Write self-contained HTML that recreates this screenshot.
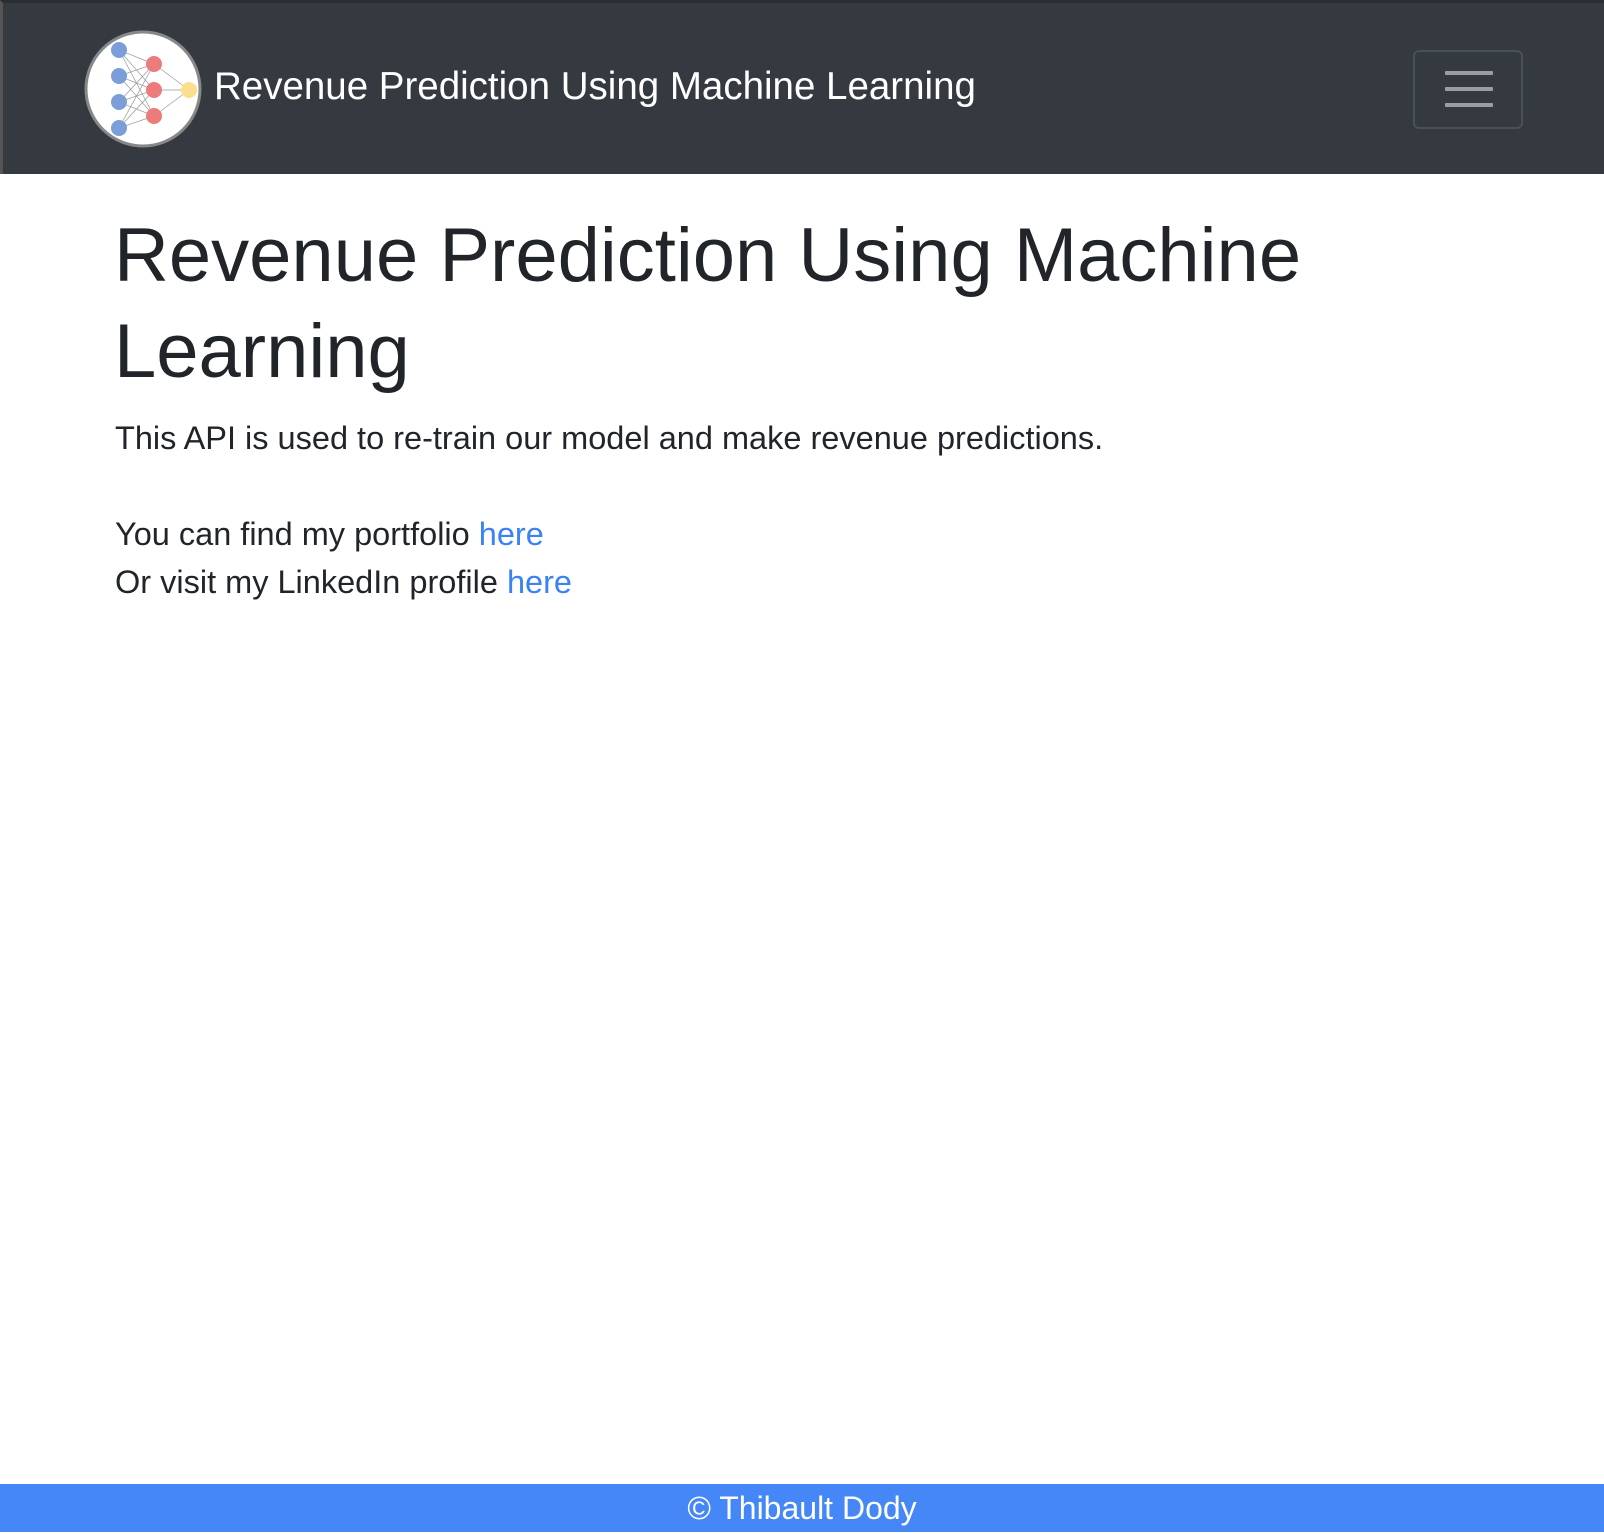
<!DOCTYPE html>
<html><head><style>
body{margin:0;width:1604px;height:1534px;position:relative;background:#fff;font-family:"Liberation Sans",sans-serif;color:#212529;overflow:hidden}
.nav{position:absolute;left:0;top:0;width:1604px;height:174px;background:#343a40;border-top:3px solid #2a2d31;border-left:3px solid #555;box-sizing:border-box}
.logo{position:absolute;left:81px;top:27px;width:118px;height:118px}
.brand{position:absolute;left:211px;top:62px;font-size:38.5px;color:#fff;white-space:nowrap}
.tog{position:absolute;left:1410px;top:47px;width:110px;height:79px;border:2px solid #4a5057;border-radius:6px;box-sizing:border-box}
.tog i{position:absolute;left:30px;width:48px;height:4px;background:#9a9da1;border-radius:1px}
h1{position:absolute;left:114px;top:208px;margin:0;font-weight:normal;font-size:76px;line-height:96px;width:1250px}
.p{position:absolute;left:115px;font-size:32.5px;white-space:nowrap}
a{color:#3b82f6;text-decoration:none}
.foot{position:absolute;left:0;top:1484px;width:1604px;height:48px;background:#4587f6;color:#fff;font-size:32px;text-align:center;line-height:48px}
</style></head><body>
<div class="nav">
<svg class="logo" viewBox="0 0 118 118">
<circle cx="59" cy="59" r="57" fill="#fff" stroke="#888" stroke-width="3"/>
<g stroke="#999" stroke-width="0.7">
<line x1="35" y1="20" x2="70" y2="34"/><line x1="35" y1="20" x2="70" y2="60"/><line x1="35" y1="20" x2="70" y2="86"/>
<line x1="35" y1="46" x2="70" y2="34"/><line x1="35" y1="46" x2="70" y2="60"/><line x1="35" y1="46" x2="70" y2="86"/>
<line x1="35" y1="72" x2="70" y2="34"/><line x1="35" y1="72" x2="70" y2="60"/><line x1="35" y1="72" x2="70" y2="86"/>
<line x1="35" y1="98" x2="70" y2="34"/><line x1="35" y1="98" x2="70" y2="60"/><line x1="35" y1="98" x2="70" y2="86"/>
<line x1="70" y1="34" x2="105" y2="60"/><line x1="70" y1="60" x2="105" y2="60"/><line x1="70" y1="86" x2="105" y2="60"/>
</g>
<g fill="#7b9ed8"><circle cx="35" cy="20" r="8"/><circle cx="35" cy="46" r="8"/><circle cx="35" cy="72" r="8"/><circle cx="35" cy="98" r="8"/></g>
<g fill="#ec7b7b"><circle cx="70" cy="34" r="8"/><circle cx="70" cy="60" r="8"/><circle cx="70" cy="86" r="8"/></g>
<circle cx="105" cy="60" r="8" fill="#fbdf8c"/>
</svg>
<div class="brand">Revenue Prediction Using Machine Learning</div>
<div class="tog"><i style="top:19px"></i><i style="top:35px"></i><i style="top:51px"></i></div>
</div>
<h1>Revenue Prediction Using Machine Learning</h1>
<div class="p" style="top:420px">This API is used to re-train our model and make revenue predictions.</div>
<div class="p" style="top:516px">You can find my portfolio <a>here</a></div>
<div class="p" style="top:564px">Or visit my LinkedIn profile <a>here</a></div>
<div class="foot">© Thibault Dody</div>
</body></html>
